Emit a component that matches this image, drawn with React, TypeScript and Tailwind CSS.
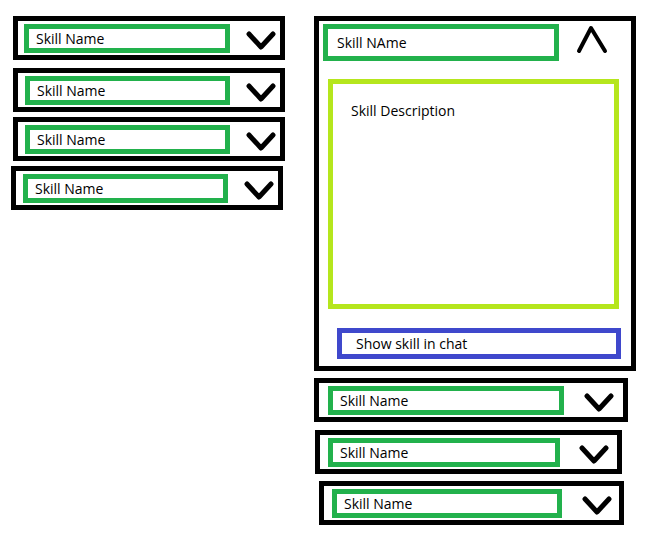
import React from 'react';

const font = { fontFamily: '"Open Sans", "Liberation Sans", sans-serif' };

const ChevronDown: React.FC = () => (
  <svg width="30" height="22" viewBox="0 0 30 22" className="shrink-0">
    <polyline points="3,4 15,17 27,4" fill="none" stroke="#000" strokeWidth={5} strokeLinecap="round" strokeLinejoin="round" />
  </svg>
);

const ChevronUp: React.FC = () => (
  <svg width="32" height="30" viewBox="0 0 32 30" className="shrink-0">
    <polyline points="3,26 15,3 29,26" fill="none" stroke="#000" strokeWidth={4} strokeLinecap="round" strokeLinejoin="round" />
  </svg>
);

interface SkillRowProps {
  outer: string;
  name: string;
  chevron: string;
}

// collapsed skill row: black frame, green name field, down arrow
const SkillRow: React.FC<SkillRowProps> = ({ outer, name, chevron }) => (
  <div className={`border-[5px] border-black h-[44px] flex items-start pt-[3px] ${outer}`}>
    <div className={`border-[5px] border-[#22b14c] h-[29px] flex items-center pl-[7px] text-[14px] text-black ${name}`}>
      Skill Name
    </div>
    <div className={`mt-[6px] ${chevron}`}>
      <ChevronDown />
    </div>
  </div>
);

export default function App() {
  return (
    <div className="w-[646px] h-[534px] bg-white flex items-start" style={font}>
      <div className="flex flex-col mt-[16px]">
        <SkillRow outer="ml-[13px] w-[272px] pl-[6px]" name="w-[206px]" chevron="ml-[16px]" />
        <SkillRow outer="ml-[13px] w-[272px] pl-[7px] mt-[8px]" name="w-[205px]" chevron="ml-[16px]" />
        <SkillRow outer="ml-[13px] w-[272px] pl-[7px] mt-[5px]" name="w-[205px]" chevron="ml-[16px]" />
        <SkillRow outer="ml-[11px] w-[272px] pl-[7px] mt-[5px]" name="w-[205px]" chevron="ml-[16px]" />
      </div>

      <div className="flex flex-col mt-[16px] ml-[29px]">
        <div className="border-[5px] border-black w-[322px] h-[355px] flex flex-col pl-[4px] pt-[3px]">
          <div className="flex items-start">
            <div className="border-[5px] border-[#22b14c] w-[236px] h-[37px] flex items-center pl-[9px] text-[14px] text-black">
              Skill NAme
            </div>
            <div className="ml-[17px] mt-[1px]">
              <ChevronUp />
            </div>
          </div>
          <div className="border-[5px] border-[#b5e61d] w-[291px] h-[230px] ml-[5px] mt-[18px] pl-[18px] pt-[16px] text-[14px] text-black">
            Skill Description
          </div>
          <div className="border-[5px] border-[#3f48cc] w-[284px] h-[31px] ml-[14px] mt-[19px] flex items-center pl-[14px] text-[14px] text-black">
            Show skill in chat
          </div>
        </div>
        <SkillRow outer="w-[314px] pl-[9px] mt-[7px]" name="w-[236px]" chevron="ml-[20px]" />
        <SkillRow outer="ml-[1px] w-[307px] pl-[8px] mt-[8px]" name="w-[232px]" chevron="ml-[19px]" />
        <SkillRow outer="ml-[5px] w-[305px] pl-[8px] mt-[7px]" name="w-[230px]" chevron="ml-[20px]" />
      </div>
    </div>
  );
}
